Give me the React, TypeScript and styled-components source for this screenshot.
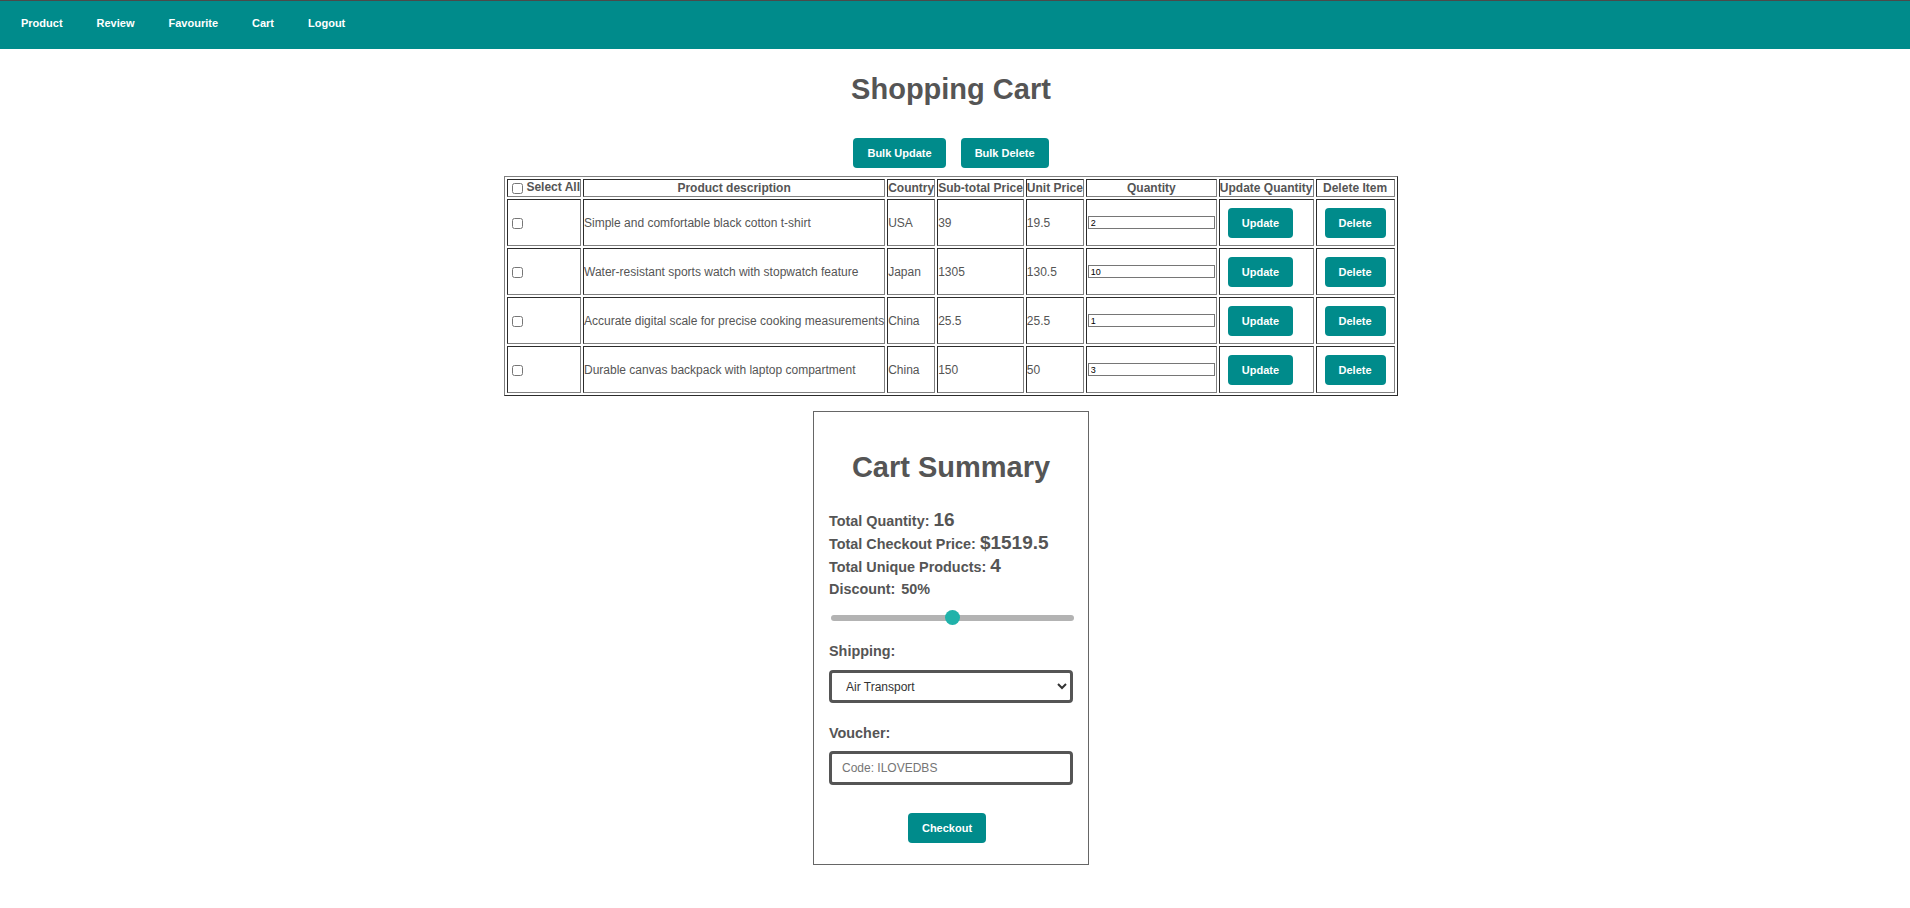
import React from "react";
import styled, { createGlobalStyle } from "styled-components";

const GlobalStyle = createGlobalStyle`
  body {
    margin: 0;
    font-family: "Liberation Sans", Arial, sans-serif;
    color: #555;
    background: #fff;
  }
`;

const teal = "#008b8b";

const Nav = styled.nav`
  display: flex;
  align-items: center;
  height: 44px;
  padding: 0 4px 4px;
  background-color: ${teal};
  border-top: 1px solid #4a4a4a;
`;

const NavLink = styled.a`
  padding: 0 17px;
  color: #fff;
  font-size: 11px;
  font-weight: bold;
  text-decoration: none;
  cursor: pointer;
`;

const Main = styled.main`
  display: flex;
  flex-direction: column;
  align-items: center;
  padding-right: 8px;
`;

const Title = styled.h1`
  margin: 24px 0 0;
  font-size: 29px;
  font-weight: bold;
  color: #555;
`;

const BulkBar = styled.div`
  display: flex;
  gap: 15px;
  margin-top: 32px;
`;

const Button = styled.button`
  height: 30px;
  padding: 0 14px;
  border: none;
  border-radius: 4px;
  background-color: ${teal};
  color: #fff;
  font-family: "Liberation Sans", Arial, sans-serif;
  font-size: 11px;
  font-weight: bold;
  cursor: pointer;
`;

const CellButton = styled(Button)`
  display: block;
  margin: 7.5px 8px;
`;

const CartTable = styled.table`
  margin-top: 8px;
  border-collapse: separate;
  border-spacing: 2px;
  border: 1px outset #808080;
  font-size: 12px;
  color: #555;
`;

const HeadCell = styled.th`
  padding: 0;
  border: 1px inset #808080;
  font-weight: bold;
  text-align: center;
  white-space: nowrap;
`;

const Cell = styled.td`
  padding: 0;
  border: 1px inset #808080;
  text-align: left;
  vertical-align: middle;
  white-space: nowrap;
`;

const Checkbox = styled.input`
  width: 11px;
  height: 11px;
  margin: 3px 3px 2px 4px;
  vertical-align: middle;
`;

const QuantityInput = styled.input`
  display: block;
  box-sizing: border-box;
  width: 127px;
  height: 13px;
  margin: 0 1px;
  padding: 0 2px;
  border: 1px solid #767676;
  font-family: "Liberation Sans", Arial, sans-serif;
  font-size: 9px;
  color: #000;
`;

const Summary = styled.section`
  display: flex;
  flex-direction: column;
  box-sizing: border-box;
  width: 276px;
  margin-top: 15px;
  padding: 15px 15px 21px;
  border: 1px solid #666;
`;

const SummaryTitle = styled.h2`
  margin: 24px 0 25px;
  font-size: 29px;
  font-weight: bold;
  text-align: center;
  color: #555;
`;

const StatRow = styled.div`
  display: flex;
  align-items: baseline;
  gap: 4px;
  height: 23px;
  font-size: 14.4px;
  font-weight: bold;
`;

const DiscountRow = styled(StatRow)`
  gap: 6px;
  padding-top: 3px;
`;

const StatValue = styled.span`
  font-size: 19px;
`;

const Slider = styled.input`
  -webkit-appearance: none;
  appearance: none;
  width: 243px;
  height: 15px;
  margin: 6px 0 0 2px;
  background: transparent;

  &::-webkit-slider-runnable-track {
    height: 6px;
    border-radius: 3px;
    background: #b3b3b3;
  }

  &::-webkit-slider-thumb {
    -webkit-appearance: none;
    width: 15px;
    height: 15px;
    margin-top: -4.5px;
    border: none;
    border-radius: 50%;
    background: #20b2aa;
  }
`;

const FieldLabel = styled.label<{ $gap: number }>`
  display: block;
  margin-top: ${(p) => p.$gap}px;
  font-size: 14.4px;
  font-weight: bold;
`;

const ShippingSelect = styled.select`
  box-sizing: border-box;
  width: 100%;
  height: 33px;
  margin-top: 11px;
  padding: 0 10px;
  border: 3px solid #555;
  border-radius: 4px;
  background: #fff;
  color: #333;
  font-family: "Liberation Sans", Arial, sans-serif;
  font-size: 12px;
`;

const VoucherInput = styled.input`
  box-sizing: border-box;
  width: 100%;
  height: 34px;
  margin-top: 10px;
  padding: 0 10px;
  border: 3px solid #555;
  border-radius: 4px;
  font-family: "Liberation Sans", Arial, sans-serif;
  font-size: 12px;
  color: #333;

  &::placeholder {
    color: #757575;
  }
`;

const CheckoutButton = styled(Button)`
  align-self: center;
  margin: 28px 8px 0 0;
`;

const items = [
  { id: 1, description: "Simple and comfortable black cotton t-shirt", country: "USA", subtotal: "39", unitPrice: "19.5", quantity: 2 },
  { id: 2, description: "Water-resistant sports watch with stopwatch feature", country: "Japan", subtotal: "1305", unitPrice: "130.5", quantity: 10 },
  { id: 3, description: "Accurate digital scale for precise cooking measurements", country: "China", subtotal: "25.5", unitPrice: "25.5", quantity: 1 },
  { id: 4, description: "Durable canvas backpack with laptop compartment", country: "China", subtotal: "150", unitPrice: "50", quantity: 3 },
];

const App: React.FC = () => {
  const totalQuantity = items.reduce((sum, item) => sum + item.quantity, 0);

  return (
    <>
      <GlobalStyle />
      <Nav>
        <NavLink>Product</NavLink>
        <NavLink>Review</NavLink>
        <NavLink>Favourite</NavLink>
        <NavLink>Cart</NavLink>
        <NavLink>Logout</NavLink>
      </Nav>

      <Main>
        <Title>Shopping Cart</Title>

        <BulkBar>
          <Button>Bulk Update</Button>
          <Button>Bulk Delete</Button>
        </BulkBar>

        <CartTable>
          <thead>
            <tr>
              <HeadCell>
                <Checkbox type="checkbox" />
                Select All
              </HeadCell>
              <HeadCell>Product description</HeadCell>
              <HeadCell>Country</HeadCell>
              <HeadCell>Sub-total Price</HeadCell>
              <HeadCell>Unit Price</HeadCell>
              <HeadCell>Quantity</HeadCell>
              <HeadCell>Update Quantity</HeadCell>
              <HeadCell>Delete Item</HeadCell>
            </tr>
          </thead>
          <tbody>
            {items.map((item) => (
              <tr key={item.id}>
                <Cell>
                  <Checkbox type="checkbox" />
                </Cell>
                <Cell>{item.description}</Cell>
                <Cell>{item.country}</Cell>
                <Cell>{item.subtotal}</Cell>
                <Cell>{item.unitPrice}</Cell>
                <Cell>
                  <QuantityInput type="number" defaultValue={item.quantity} />
                </Cell>
                <Cell>
                  <CellButton>Update</CellButton>
                </Cell>
                <Cell>
                  <CellButton>Delete</CellButton>
                </Cell>
              </tr>
            ))}
          </tbody>
        </CartTable>

        <Summary>
          <SummaryTitle>Cart Summary</SummaryTitle>
          <StatRow>
            Total Quantity: <StatValue>{totalQuantity}</StatValue>
          </StatRow>
          <StatRow>
            Total Checkout Price: <StatValue>$1519.5</StatValue>
          </StatRow>
          <StatRow>
            Total Unique Products: <StatValue>{items.length}</StatValue>
          </StatRow>
          <DiscountRow>
            <span>Discount:</span>
            <span>50%</span>
          </DiscountRow>
          <Slider type="range" min={0} max={100} defaultValue={50} />

          <FieldLabel $gap={18}>Shipping:</FieldLabel>
          <ShippingSelect defaultValue="air">
            <option value="air">Air Transport</option>
            <option value="sea">Sea Transport</option>
            <option value="land">Land Transport</option>
          </ShippingSelect>

          <FieldLabel $gap={22}>Voucher:</FieldLabel>
          <VoucherInput type="text" placeholder="Code: ILOVEDBS" />

          <CheckoutButton>Checkout</CheckoutButton>
        </Summary>
      </Main>
    </>
  );
};

export default App;
